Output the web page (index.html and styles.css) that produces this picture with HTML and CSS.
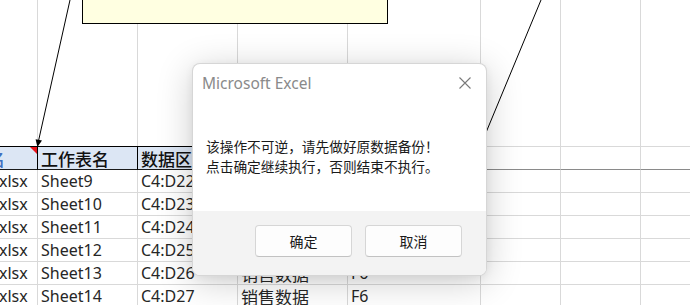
FILE: index.html
```html
<!DOCTYPE html>
<html lang="zh-CN">
<head>
<meta charset="utf-8">
<title>Microsoft Excel</title>
<link rel="stylesheet" href="styles.css">
</head>
<body>
<div class="page">
  <div class="sheet">
    <div class="c top"></div><div class="c top"></div><div class="c top"></div><div class="c top"></div>
    <div class="c top"></div><div class="c top"></div><div class="c top"></div><div class="c top"></div>

    <div class="c hd first"><span class="blue">文件名</span><i class="flag"></i></div>
    <div class="c hd">工作表名</div>
    <div class="c hd">数据区域</div>
    <div class="c hd">数据类型</div>
    <div class="c hd">目标列</div>
    <div class="c hd2"></div><div class="c hd2"></div><div class="c hd2"></div>

    <div class="c lat cut">xlsx</div><div class="c lat">Sheet9</div><div class="c lat">C4:D22</div><div class="c cj">销售数据</div><div class="c lat">F6</div><div class="c"></div><div class="c"></div><div class="c"></div>
    <div class="c lat cut">xlsx</div><div class="c lat">Sheet10</div><div class="c lat">C4:D23</div><div class="c cj">销售数据</div><div class="c lat">F6</div><div class="c"></div><div class="c"></div><div class="c"></div>
    <div class="c lat cut">xlsx</div><div class="c lat">Sheet11</div><div class="c lat">C4:D24</div><div class="c cj">销售数据</div><div class="c lat">F6</div><div class="c"></div><div class="c"></div><div class="c"></div>
    <div class="c lat cut">xlsx</div><div class="c lat">Sheet12</div><div class="c lat">C4:D25</div><div class="c cj">销售数据</div><div class="c lat">F6</div><div class="c"></div><div class="c"></div><div class="c"></div>
    <div class="c lat cut">xlsx</div><div class="c lat">Sheet13</div><div class="c lat">C4:D26</div><div class="c cj">销售数据</div><div class="c lat">F6</div><div class="c"></div><div class="c"></div><div class="c"></div>
    <div class="c lat cut">xlsx</div><div class="c lat">Sheet14</div><div class="c lat">C4:D27</div><div class="c cj">销售数据</div><div class="c lat">F6</div><div class="c"></div><div class="c"></div><div class="c"></div>
  </div>

  <div class="note"></div>

  <svg class="arrows" width="690" height="305" viewBox="0 0 690 305">
    <line x1="70" y1="0" x2="38.6" y2="140.5" stroke="#000" stroke-width="1"/>
    <polygon points="37.4,147 42,140.6 35.6,139.2" fill="#000"/>
    <line x1="541" y1="0" x2="458" y2="200" stroke="#000" stroke-width="1"/>
  </svg>

  <div class="dialog">
    <div class="dlg-head">
      <span class="dlg-title">Microsoft Excel</span>
      <svg class="close" width="12" height="12" viewBox="0 0 12 12">
        <path d="M0.5 0.5 L11.5 11.5 M11.5 0.5 L0.5 11.5" stroke="#7a7a7a" stroke-width="1.1" fill="none"/>
      </svg>
    </div>
    <div class="dlg-body">
      <p>该操作不可逆，请先做好原数据备份！</p>
      <p>点击确定继续执行，否则结束不执行。</p>
    </div>
    <div class="dlg-foot">
      <button class="btn">确定</button>
      <button class="btn">取消</button>
    </div>
  </div>
</div>
</body>
</html>
```

FILE: styles.css
```css
html, body {
  margin: 0;
  padding: 0;
  overflow: hidden;
  background: #fff;
}

.page {
  position: relative;
  width: 690px;
  height: 305px;
  overflow: hidden;
}

.sheet {
  display: grid;
  grid-template-columns: 101px 100px 100px 110px 133px 80px 80px 80px;
  grid-template-rows: 146px 24px repeat(6, 23px);
  margin-left: -63px;
  width: 784px;
}

.c {
  box-sizing: border-box;
  border-right: 1px solid #d9d9d9;
  border-bottom: 1px solid #d9d9d9;
  display: flex;
  align-items: center;
  padding-left: 3px;
  white-space: nowrap;
  overflow: hidden;
  color: #262626;
}

.top {
  border-bottom: none;
}

.hd {
  position: relative;
  background: #dce6f4;
  border-top: 1px solid #000;
  border-right: 1px solid #000;
  border-bottom: 1px solid #1a1a1a;
  font-family: "Noto Sans CJK SC", sans-serif;
  font-size: 17px;
  font-weight: 500;
  color: #111;
}

.hd2 {
  border-top: 1px solid #d9d9d9;
  border-bottom: 1px solid #8a8a8a;
}

.first {
  justify-content: flex-end;
  padding-right: 0;
}

.blue {
  color: #3f6fbf;
  margin-right: 32px;
}

.flag {
  position: absolute;
  top: 0;
  right: 0;
  width: 0;
  height: 0;
  border-top: 7px solid #e8141c;
  border-left: 7px solid transparent;
}

.lat {
  font-family: "Noto Sans", sans-serif;
  font-size: 16px;
}

.cj {
  font-family: "Noto Sans CJK SC", sans-serif;
  font-size: 17px;
}

.cut {
  padding-left: 62px;
}

.note {
  position: absolute;
  left: 82px;
  top: -40px;
  width: 306px;
  height: 64px;
  box-sizing: border-box;
  background: #ffffe1;
  border: 1px solid #000;
}

.arrows {
  position: absolute;
  left: 0;
  top: 0;
  pointer-events: none;
}

.dialog {
  position: absolute;
  left: 192px;
  top: 63px;
  width: 295px;
  height: 213px;
  box-sizing: border-box;
  border: 1px solid rgba(0, 0, 0, 0.16);
  border-radius: 8px;
  background: #fff;
  overflow: hidden;
  display: flex;
  flex-direction: column;
  box-shadow: 0 6px 36px rgba(0, 0, 0, 0.2), 0 2px 8px rgba(0, 0, 0, 0.06);
}

.dlg-head {
  height: 37px;
  flex: none;
  display: flex;
  align-items: center;
  justify-content: space-between;
  padding: 0 15px 0 9px;
}

.dlg-title {
  font-family: "Noto Sans", sans-serif;
  font-size: 15.5px;
  color: #8a8a8a;
}

.close {
  display: block;
}

.dlg-body {
  flex: 1;
  padding: 35px 13px 0;
  font-family: "Noto Sans CJK SC", sans-serif;
  font-size: 13.7px;
  line-height: 20px;
  color: #1a1a1a;
}

.dlg-body p {
  margin: 0;
}

.dlg-foot {
  height: 64px;
  flex: none;
  box-sizing: border-box;
  background: #f3f3f3;
  display: flex;
  justify-content: flex-end;
  align-items: flex-start;
  gap: 13px;
  padding: 14px 24px 0 0;
}

.btn {
  width: 97px;
  height: 32px;
  box-sizing: border-box;
  background: #fdfdfd;
  border: 1px solid #d6d6d6;
  border-bottom-color: #c2c2c2;
  border-radius: 4px;
  font-family: "Noto Sans CJK SC", sans-serif;
  font-size: 14px;
  color: #1a1a1a;
  padding: 0;
}
```
